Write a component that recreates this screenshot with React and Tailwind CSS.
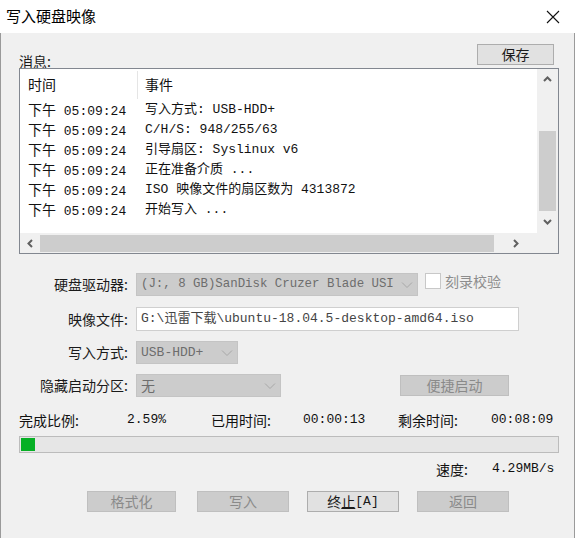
import React from "react";

const cjk = { fontFamily: '"Microsoft YaHei", "Noto Sans CJK SC", sans-serif' };
const mono = { fontFamily: '"SimSun", "Liberation Mono", "Noto Sans CJK SC", monospace' };

const logs = [
    ["05:09:24", "写入方式: USB-HDD+"],
    ["05:09:24", "C/H/S: 948/255/63"],
    ["05:09:24", "引导扇区: Syslinux v6"],
    ["05:09:24", "正在准备介质 ..."],
    ["05:09:24", "ISO 映像文件的扇区数为 4313872"],
    ["05:09:24", "开始写入 ..."],
];

const Chevron = ({ dir, className = "" }) => {
    const paths = {
        up: "M2 7 L5.5 3.5 L9 7",
        down: "M2 4 L5.5 7.5 L9 4",
        left: "M7 2 L3.5 5.5 L7 9",
        right: "M4 2 L7.5 5.5 L4 9",
    };
    return (
        <svg width="11" height="11" viewBox="0 0 11 11" className={className}>
            <path d={paths[dir]} fill="none" stroke="#606060" strokeWidth="2" />
        </svg>
    );
};

const SelectArrow = () => (
    <svg width="12" height="8" viewBox="0 0 12 8" className="shrink-0">
        <path d="M1 1.5 L6 6.5 L11 1.5" fill="none" stroke="#a8a8a8" strokeWidth="1" />
    </svg>
);

function Label({ children }) {
    return <div className="w-[110px] text-right text-[14px] text-[#1a1a1a] pr-[1px]" style={cjk}>{children}</div>;
}

function DisabledSelect({ width, children, font, size = "text-[13px]" }) {
    return (
        <div className={`${width} h-full flex items-center justify-between gap-[4px] bg-[#cccccc] border border-[#c4c4c4] pl-[4px] pr-[4px] ${size} text-[#6d6d6d]`} style={font}>
            <span className="whitespace-nowrap">{children}</span>
            <SelectArrow />
        </div>
    );
}

function Btn({ children, disabled, className = "" }) {
    return (
        <div className={`h-[21px] flex items-center justify-center text-[14px] border ${disabled ? "bg-[#cccccc] border-[#bfbfbf] text-[#8a8a8a]" : "bg-[#e1e1e1] border-[#adadad] text-[#1a1a1a]"} ${className}`} style={cjk}>
            {children}
        </div>
    );
}

export default function App() {
    return (
        <div className="w-[575px] h-[538px] flex flex-col bg-white overflow-hidden">
            <div className="h-[33px] flex items-center justify-between pl-[6px] pr-[15px] bg-white">
                <span className="text-[15px] text-black" style={cjk}>写入硬盘映像</span>
                <svg width="14" height="14" viewBox="0 0 14 14">
                    <path d="M1 1 L13 13 M13 1 L1 13" stroke="#111" strokeWidth="1.1" />
                </svg>
            </div>

            <div className="flex-1 bg-[#f0f0f0] border-x border-[#9a9a9a] pl-[18px] flex flex-col">
                <div className="flex items-end h-[34px] pt-[11px]">
                    <span className="text-[14px] text-[#1a1a1a] leading-[16px] mb-[-2px]" style={cjk}>消息:</span>
                    <Btn className="w-[77px] ml-auto mr-[20px] self-start">保存</Btn>
                </div>

                <div className="mt-[1px] w-[540px] h-[186px] border border-[#828790] bg-white grid grid-cols-[517px_21px] grid-rows-[164px_20px]">
                    <div className="text-[13px] text-[#111]">
                        <div className="h-[31px] flex items-center">
                            <span className="w-[117px] pl-[8px] text-[14px]" style={cjk}>时间</span>
                            <div className="w-px h-[28px] bg-[#e5e5e5]" />
                            <span className="pl-[7px] text-[14px]" style={cjk}>事件</span>
                        </div>
                        {logs.map(([t, e], i) => (
                            <div key={i} className="h-[20px] flex items-center whitespace-nowrap">
                                <span className="w-[125px] pl-[8px]" style={mono}>
                                    <span className="text-[14px]" style={cjk}>下午</span> {t}
                                </span>
                                <span style={mono}>{e}</span>
                            </div>
                        ))}
                    </div>
                    <div className="bg-[#f0f0f0] flex flex-col items-center">
                        <div className="h-[20px] flex items-center"><Chevron dir="up" /></div>
                        <div className="h-[42px]" />
                        <div className="w-[17px] h-[80px] bg-[#cdcdcd]" />
                        <div className="h-[20px] flex items-center"><Chevron dir="down" /></div>
                    </div>
                    <div className="bg-[#f0f0f0] flex items-center">
                        <div className="w-[20px] flex justify-center"><Chevron dir="left" /></div>
                        <div className="w-[454px] h-[17px] bg-[#cdcdcd]" />
                        <div className="flex-1 flex justify-center"><Chevron dir="right" /></div>
                    </div>
                    <div className="bg-[#f0f0f0]" />
                </div>

                <div className="mt-[19px] h-[23px] flex items-center">
                    <Label>硬盘驱动器:</Label>
                    <div className="ml-[7px] h-full">
                        <DisabledSelect width="w-[282px]" font={mono} size="text-[12.4px]">(J:, 8 GB)SanDisk Cruzer Blade USI</DisabledSelect>
                    </div>
                    <div className="ml-[7px] self-start w-[16px] h-[16px] border border-[#c8c8c8] bg-white" />
                    <span className="ml-[4px] text-[14px] text-[#8d8d8d] self-start mt-[-2px]" style={cjk}>刻录校验</span>
                </div>

                <div className="mt-[11px] h-[24px] flex items-center">
                    <Label>映像文件:</Label>
                    <div className="ml-[7px] w-[383px] h-full bg-white border border-[#cfcfcf] flex items-center pl-[4px] text-[13px] text-[#444] whitespace-nowrap" style={mono}>
                        G:\迅雷下载\ubuntu-18.04.5-desktop-amd64.iso
                    </div>
                </div>

                <div className="mt-[10px] h-[23px] flex items-center">
                    <Label>写入方式:</Label>
                    <div className="ml-[7px] h-full">
                        <DisabledSelect width="w-[102px]" font={mono}>USB-HDD+</DisabledSelect>
                    </div>
                </div>

                <div className="mt-[10px] h-[23px] flex items-center">
                    <Label>隐藏启动分区:</Label>
                    <div className="ml-[7px] h-full">
                        <DisabledSelect width="w-[145px]" font={cjk}><span className="text-[14px]">无</span></DisabledSelect>
                    </div>
                    <Btn disabled className="ml-[119px] w-[109px]">便捷启动</Btn>
                </div>

                <div className="mt-[14px] h-[18px] flex items-center text-[13px] text-[#111] whitespace-nowrap">
                    <span className="w-[108px] text-[14px]" style={cjk}>完成比例:</span>
                    <span className="w-[84px]" style={mono}>2.59%</span>
                    <span className="w-[92px] text-[14px]" style={cjk}>已用时间:</span>
                    <span className="w-[95px]" style={mono}>00:00:13</span>
                    <span className="w-[93px] text-[14px]" style={cjk}>剩余时间:</span>
                    <span style={mono}>00:08:09</span>
                </div>

                <div className="mt-[7px] w-[540px] h-[17px] bg-[#e6e6e6] border border-[#bcbcbc] p-[1px]">
                    <div className="h-full bg-[#06b025]" style={{ width: "2.59%" }} />
                </div>

                <div className="mt-[7px] h-[18px] flex items-center text-[13px] text-[#111] whitespace-nowrap">
                    <span className="ml-[417px] w-[56px] text-[14px]" style={cjk}>速度:</span>
                    <span style={mono}>4.29MB/s</span>
                </div>

                <div className="mt-[13px] flex items-center pl-[68px]">
                    <Btn disabled className="w-[89px]">格式化</Btn>
                    <Btn disabled className="ml-[21px] w-[92px]">写入</Btn>
                    <Btn className="ml-[18px] w-[92px]"><span>终<span className="underline">止</span></span><span style={mono} className="text-[13px]">[A]</span></Btn>
                    <Btn disabled className="ml-[18px] w-[92px]">返回</Btn>
                </div>
            </div>
        </div>
    );
}
